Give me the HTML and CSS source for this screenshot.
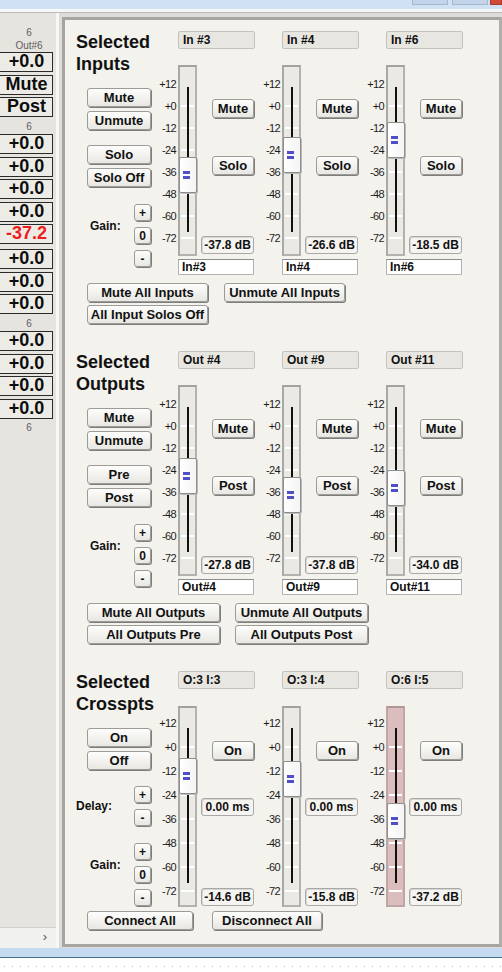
FILE: index.html
```html
<!DOCTYPE html>
<html>
<head>
<meta charset="utf-8">
<title>Mixer</title>
<link rel="stylesheet" href="styles.css">
</head>
<body>
<div class="window">
  <div class="titlebar"><span class="wbtn"></span><span class="wbtn"></span><span class="wbtn close"></span></div>
  <div class="topsep"></div>
  <div class="work">
    <aside class="strip">
      <div class="strip-list">
        <div class="num">6</div>
        <div class="num">Out#6</div>
        <div class="cell">+0.0</div>
        <div class="cell">Mute</div>
        <div class="cell">Post</div>
        <div class="num sep">6</div>
        <div class="cell">+0.0</div>
        <div class="cell">+0.0</div>
        <div class="cell">+0.0</div>
        <div class="cell">+0.0</div>
        <div class="cell red">-37.2</div>
        <div class="cell">+0.0</div>
        <div class="cell">+0.0</div>
        <div class="cell">+0.0</div>
        <div class="num sep">6</div>
        <div class="cell">+0.0</div>
        <div class="cell">+0.0</div>
        <div class="cell">+0.0</div>
        <div class="cell">+0.0</div>
        <div class="num sep">6</div>
      </div>
      <div class="strip-foot">&#8250;</div>
    </aside>
    <div class="splitter"></div>
    <main class="frame">
      <div class="panel">

        <section class="sec">
          <div class="sec-top">
            <div class="left">
              <div class="title">Selected<br>Inputs</div>
              <div class="lgroup first"><button class="btn lbtn">Mute</button><button class="btn lbtn">Unmute</button></div>
              <div class="lgroup second"><button class="btn lbtn">Solo</button><button class="btn lbtn">Solo Off</button></div>
              <div class="stepper gain"><span class="slabel">Gain:</span><div class="steps"><button class="btn sbtn">+</button><button class="btn sbtn">0</button><button class="btn sbtn">-</button></div></div>
            </div>
            <div class="ch">
              <div class="hdr">In #3</div>
              <div class="ch-body">
                <div class="scale"><span>+12</span><span>+0</span><span>-12</span><span>-24</span><span>-36</span><span>-48</span><span>-60</span><span>-72</span></div>
                <div class="fader"><div class="ticks"></div><div class="groove"></div><div class="thumb" style="top:90px"><i></i></div></div>
                <div class="ctl"><button class="btn rbtn a">Mute</button><button class="btn rbtn b">Solo</button><div class="val">-37.8 dB</div></div>
              </div>
              <div class="name">In#3</div>
            </div>
            <div class="ch">
              <div class="hdr">In #4</div>
              <div class="ch-body">
                <div class="scale"><span>+12</span><span>+0</span><span>-12</span><span>-24</span><span>-36</span><span>-48</span><span>-60</span><span>-72</span></div>
                <div class="fader"><div class="ticks"></div><div class="groove"></div><div class="thumb" style="top:70px"><i></i></div></div>
                <div class="ctl"><button class="btn rbtn a">Mute</button><button class="btn rbtn b">Solo</button><div class="val">-26.6 dB</div></div>
              </div>
              <div class="name">In#4</div>
            </div>
            <div class="ch">
              <div class="hdr">In #6</div>
              <div class="ch-body">
                <div class="scale"><span>+12</span><span>+0</span><span>-12</span><span>-24</span><span>-36</span><span>-48</span><span>-60</span><span>-72</span></div>
                <div class="fader"><div class="ticks"></div><div class="groove"></div><div class="thumb" style="top:55px"><i></i></div></div>
                <div class="ctl"><button class="btn rbtn a">Mute</button><button class="btn rbtn b">Solo</button><div class="val">-18.5 dB</div></div>
              </div>
              <div class="name">In#6</div>
            </div>
          </div>
          <div class="allbtns inputs">
            <button class="btn">Mute All Inputs</button>
            <button class="btn">Unmute All Inputs</button>
            <button class="btn">All Input Solos Off</button>
          </div>
        </section>

        <section class="sec">
          <div class="sec-top">
            <div class="left">
              <div class="title">Selected<br>Outputs</div>
              <div class="lgroup first"><button class="btn lbtn">Mute</button><button class="btn lbtn">Unmute</button></div>
              <div class="lgroup second"><button class="btn lbtn">Pre</button><button class="btn lbtn">Post</button></div>
              <div class="stepper gain"><span class="slabel">Gain:</span><div class="steps"><button class="btn sbtn">+</button><button class="btn sbtn">0</button><button class="btn sbtn">-</button></div></div>
            </div>
            <div class="ch">
              <div class="hdr">Out #4</div>
              <div class="ch-body">
                <div class="scale"><span>+12</span><span>+0</span><span>-12</span><span>-24</span><span>-36</span><span>-48</span><span>-60</span><span>-72</span></div>
                <div class="fader"><div class="ticks"></div><div class="groove"></div><div class="thumb" style="top:71px"><i></i></div></div>
                <div class="ctl"><button class="btn rbtn a">Mute</button><button class="btn rbtn b">Post</button><div class="val">-27.8 dB</div></div>
              </div>
              <div class="name">Out#4</div>
            </div>
            <div class="ch">
              <div class="hdr">Out #9</div>
              <div class="ch-body">
                <div class="scale"><span>+12</span><span>+0</span><span>-12</span><span>-24</span><span>-36</span><span>-48</span><span>-60</span><span>-72</span></div>
                <div class="fader"><div class="ticks"></div><div class="groove"></div><div class="thumb" style="top:90px"><i></i></div></div>
                <div class="ctl"><button class="btn rbtn a">Mute</button><button class="btn rbtn b">Post</button><div class="val">-37.8 dB</div></div>
              </div>
              <div class="name">Out#9</div>
            </div>
            <div class="ch">
              <div class="hdr">Out #11</div>
              <div class="ch-body">
                <div class="scale"><span>+12</span><span>+0</span><span>-12</span><span>-24</span><span>-36</span><span>-48</span><span>-60</span><span>-72</span></div>
                <div class="fader"><div class="ticks"></div><div class="groove"></div><div class="thumb" style="top:83px"><i></i></div></div>
                <div class="ctl"><button class="btn rbtn a">Mute</button><button class="btn rbtn b">Post</button><div class="val">-34.0 dB</div></div>
              </div>
              <div class="name">Out#11</div>
            </div>
          </div>
          <div class="allbtns outputs">
            <button class="btn">Mute All Outputs</button>
            <button class="btn">Unmute All Outputs</button>
            <button class="btn">All Outputs Pre</button>
            <button class="btn">All Outputs Post</button>
          </div>
        </section>

        <section class="sec">
          <div class="sec-top">
            <div class="left">
              <div class="title">Selected<br>Crosspts</div>
              <div class="lgroup first"><button class="btn lbtn">On</button><button class="btn lbtn">Off</button></div>
              <div class="stepper delay"><span class="slabel">Delay:</span><div class="steps"><button class="btn sbtn">+</button><button class="btn sbtn">-</button></div></div>
              <div class="stepper gain2"><span class="slabel">Gain:</span><div class="steps"><button class="btn sbtn">+</button><button class="btn sbtn">0</button><button class="btn sbtn">-</button></div></div>
            </div>
            <div class="ch xp">
              <div class="hdr">O:3 I:3</div>
              <div class="ch-body">
                <div class="scale"><span>+12</span><span>+0</span><span>-12</span><span>-24</span><span>-36</span><span>-48</span><span>-60</span><span>-72</span></div>
                <div class="fader"><div class="ticks"></div><div class="groove"></div><div class="thumb" style="top:50px"><i></i></div></div>
                <div class="ctl"><button class="btn rbtn a">On</button><div class="val ms">0.00 ms</div><div class="val">-14.6 dB</div></div>
              </div>
            </div>
            <div class="ch xp">
              <div class="hdr">O:3 I:4</div>
              <div class="ch-body">
                <div class="scale"><span>+12</span><span>+0</span><span>-12</span><span>-24</span><span>-36</span><span>-48</span><span>-60</span><span>-72</span></div>
                <div class="fader"><div class="ticks"></div><div class="groove"></div><div class="thumb" style="top:53px"><i></i></div></div>
                <div class="ctl"><button class="btn rbtn a">On</button><div class="val ms">0.00 ms</div><div class="val">-15.8 dB</div></div>
              </div>
            </div>
            <div class="ch xp">
              <div class="hdr">O:6 I:5</div>
              <div class="ch-body">
                <div class="scale"><span>+12</span><span>+0</span><span>-12</span><span>-24</span><span>-36</span><span>-48</span><span>-60</span><span>-72</span></div>
                <div class="fader pink"><div class="ticks"></div><div class="groove"></div><div class="thumb" style="top:95px"><i></i></div></div>
                <div class="ctl"><button class="btn rbtn a">On</button><div class="val ms">0.00 ms</div><div class="val">-37.2 dB</div></div>
              </div>
            </div>
          </div>
          <div class="allbtns xpts">
            <button class="btn">Connect All</button>
            <button class="btn">Disconnect All</button>
          </div>
        </section>

      </div>
    </main>
  </div>
  <div class="statusbar"></div>
  <div class="footer"></div>
</div>
</body>
</html>
```

FILE: styles.css
```css
* { box-sizing: border-box; }
html, body { margin: 0; padding: 0; }
body {
  width: 502px;
  height: 972px;
  overflow: hidden;
  background: #ffffff;
  font-family: "Liberation Sans", Arial, sans-serif;
  color: #111;
}
.window { width: 502px; height: 972px; display: flex; flex-direction: column; }

.titlebar {
  height: 9px;
  background: #d0e1f3;
  display: flex;
  justify-content: flex-end;
  align-items: flex-start;
  flex: none;
}
.wbtn {
  width: 36px;
  height: 5px;
  margin-left: 4px;
  background: #c2d4ea;
  border: 1px solid #a5b8cf;
  border-top: none;
}
.wbtn.close { width: 12px; margin-left: 2px; background: #cf4a38; border-color: #a83a2c; }
.topsep {
  height: 4px;
  background: #f6f7f8;
  border-bottom: 1px solid #b9b9b9;
  flex: none;
}

.work { height: 935px; display: flex; flex: none; }

/* left strip */
.strip {
  width: 56px;
  background: #e6e4df;
  display: flex;
  flex-direction: column;
  overflow: hidden;
}
.strip-list { flex: 1; padding-top: 13px; }
.num {
  height: 13px;
  line-height: 13px;
  font-size: 10px;
  color: #5e5e5e;
  text-align: center;
  padding-left: 2px;
}
.num.sep { margin: 1px 0 1.5px; }
.cell {
  margin-left: -4px;
  width: 57px;
  height: 20px;
  margin-bottom: 2.5px;
  border: 1.5px solid #2a2a2a;
  background: #ecebe6;
  font-weight: bold;
  font-size: 18px;
  line-height: 17px;
  text-align: center;
  padding-left: 4px;
  color: #0d0d0d;
}
.cell.red { color: #f01c1c; margin-bottom: 5px; }
.strip-foot {
  height: 21px;
  border-top: 1px solid #cfcfcf;
  background: #f1f1f0;
  text-align: right;
  padding-right: 9px;
  font-size: 13px;
  line-height: 17px;
  color: #555;
}

.splitter { width: 3px; background: #f7f7f6; }

/* main frame */
.frame {
  flex: 1;
  background: #dddcd9;
  padding: 4px 0 1px 3px;
  display: flex;
}
.panel {
  flex: 1;
  background: #f4f2ec;
  border: 3px solid #a6a5a0;
  border-right-color: #b0afaa;
  padding-top: 11px;
}

.sec { display: flex; flex-direction: column; }
.sec + .sec { margin-top: 27px; }
.sec-top { display: flex; align-items: flex-start; }

.left { width: 89px; display: flex; flex-direction: column; flex: none; }
.title {
  margin: 1px 0 0 11px;
  font-weight: bold;
  font-size: 18px;
  line-height: 21.5px;
  color: #111;
  white-space: nowrap;
}

.btn {
  font-family: "Liberation Sans", Arial, sans-serif;
  font-weight: bold;
  font-size: 13px;
  line-height: 16px;
  color: #111;
  background: linear-gradient(#fdfdfc, #e8e7e2);
  border: 1px solid #9c9b97;
  border-radius: 3px;
  box-shadow: 1px 1px 0 #7d7d7b;
  padding: 0;
  height: 19px;
  text-align: center;
  white-space: nowrap;
}

.lgroup { display: flex; flex-direction: column; gap: 4px; margin-left: 22px; }
.lgroup.first { margin-top: 13px; }
.lgroup.second { margin-top: 15px; }
.lbtn { width: 64px; }

.stepper { display: flex; align-items: center; }
.stepper.gain { margin-top: 17px; }
.stepper.delay { margin-top: 16px; }
.stepper.gain2 { margin-top: 17px; }
.slabel {
  width: 44px;
  margin-left: 25px;
  font-weight: bold;
  font-size: 12px;
  color: #111;
}
.stepper.gain .slabel, .stepper.gain2 .slabel { margin-bottom: 20px; }
.stepper.delay .slabel { margin-left: 11px; width: 58px; }
.steps { display: flex; flex-direction: column; gap: 6px; }
.sbtn { width: 17px; height: 17px; font-size: 12px; line-height: 14px; border-radius: 3px; }

/* channel */
.ch { width: 100px; margin-right: 4px; display: flex; flex-direction: column; flex: none; }
.hdr {
  margin-left: 24px;
  width: 77px;
  height: 18px;
  background: #e8e6e0;
  border: 1px solid #c4c2bc;
  border-radius: 2px;
  font-weight: bold;
  font-size: 12px;
  line-height: 16px;
  padding-left: 4px;
  white-space: nowrap;
}
.ch-body { display: flex; margin-top: 16px; }
.ch.xp .ch-body { margin-top: 17px; }

.scale {
  width: 23px;
  margin-right: 1px;
  padding-top: 8px;
  display: flex;
  flex-direction: column;
  font-size: 11px;
  letter-spacing: -0.6px;
  color: #1b1b1b;
  text-align: right;
}
.scale span { height: 22px; line-height: 22px; display: block; padding-right: 1px; }
.ch.xp .scale { padding-top: 5px; }
.ch.xp .scale span { height: 24px; line-height: 24px; }

.fader {
  position: relative;
  width: 19px;
  height: 191px;
  flex: none;
  background: #ebe9e3;
  border: 2px solid #b4b2ac;
  border-top-color: #a3a19b;
  border-left-color: #aaa8a2;
}
.ch.xp .fader { height: 201px; }
.fader.pink { background: #dbbdbd; border-color: #bfa5a5; border-top-color: #b09696; }
.groove {
  position: absolute;
  left: 7px;
  top: 20px;
  width: 2px;
  height: 145px;
  background: #111;
}
.ch.xp .groove { height: 155px; }
.ticks {
  position: absolute;
  left: 1px;
  right: 1px;
  top: 38px;
  height: 134px;
  background: repeating-linear-gradient(to bottom, #ffffff 0 2px, transparent 2px 22px);
}
.ch.xp .ticks { height: 146px; background: repeating-linear-gradient(to bottom, #ffffff 0 2px, transparent 2px 24px); }
.thumb {
  position: absolute;
  left: -1px;
  width: 18px;
  height: 36px;
  background: linear-gradient(to right, #ffffff, #f4f4f4);
  border: 1px solid #8e8e8e;
  border-radius: 2px;
  box-shadow: 1px 1px 0 #b9b9b9;
}
.thumb i {
  position: absolute;
  left: 3px;
  top: 50%;
  margin-top: -4px;
  width: 7px;
  height: 8px;
  border-top: 3px solid #5050c6;
  border-bottom: 3px solid #5050c6;
}

.ctl {
  width: 53px;
  margin-left: 4px;
  display: flex;
  flex-direction: column;
  align-items: flex-end;
}
.rbtn { width: 42px; }
.rbtn.a { margin-top: 34px; }
.rbtn.b { margin-top: 38px; }
.ch.xp .rbtn.a { margin-top: 35px; }
.val {
  margin-top: auto;
  margin-bottom: 2px;
  width: 53px;
  height: 18px;
  background: #f5f4f1;
  border: 1px solid #a8a8a6;
  border-radius: 3px;
  box-shadow: inset 1px 1px 0 #d6d6d4;
  font-weight: bold;
  font-size: 12px;
  line-height: 16px;
  text-align: center;
  white-space: nowrap;
}
.ch.xp .val { margin-bottom: 1px; }
.ch.xp .val.ms { margin-top: 38px; margin-bottom: 0; }

.name {
  margin: 3px 0 0 24px;
  width: 76px;
  height: 16px;
  background: #ffffff;
  border: 1px solid #b2b2b2;
  border-top-color: #8d8d8d;
  font-weight: bold;
  font-size: 12px;
  line-height: 14px;
  padding-left: 3px;
}

.allbtns { display: grid; margin-left: 22px; row-gap: 3px; }
.allbtns.inputs { grid-template-columns: 121px 121px; column-gap: 16px; margin-top: 8px; }
.allbtns.outputs { grid-template-columns: 133px 133px; column-gap: 15px; margin-top: 8px; }
.allbtns.xpts { grid-template-columns: 106px 110px; column-gap: 19px; margin-top: 4px; }

.statusbar {
  height: 10px;
  background: #c6daef;
  border-bottom: 1px solid #3f6f8f;
  flex: none;
}
.footer {
  flex: 1;
  background-color: #ffffff;
  background-image: linear-gradient(to right, #b8b8b8 1px, transparent 1px);
  background-size: 8px 1px;
  background-repeat: repeat-x;
  background-position: 4px 8px;
}
```
